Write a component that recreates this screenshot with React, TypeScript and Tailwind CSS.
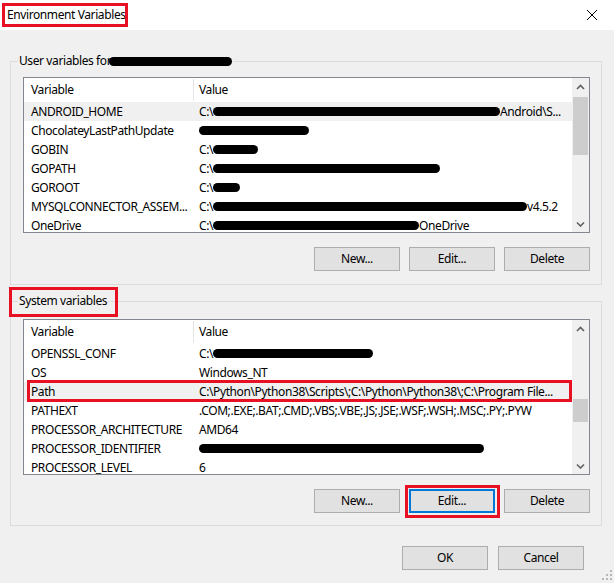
import React from 'react';

type Part = string | { ink: string };
type Row = { name: string; value: Part[]; hl?: boolean; marked?: boolean };

const userRows: Row[] = [
  { name: 'ANDROID_HOME', value: ['C:\\', { ink: 'w-[287px]' }, 'Android\\S...'], hl: true },
  { name: 'ChocolateyLastPathUpdate', value: [{ ink: 'w-[110px]' }] },
  { name: 'GOBIN', value: ['C:\\', { ink: 'w-[45px]' }] },
  { name: 'GOPATH', value: ['C:\\', { ink: 'w-[227px]' }] },
  { name: 'GOROOT', value: ['C:\\', { ink: 'w-[27px]' }] },
  { name: 'MYSQLCONNECTOR_ASSEM...', value: ['C:\\', { ink: 'w-[314px]' }, 'v4.5.2'] },
  { name: 'OneDrive', value: ['C:\\', { ink: 'w-[206px]' }, 'OneDrive'] },
];

const systemRows: Row[] = [
  { name: 'OPENSSL_CONF', value: ['C:\\', { ink: 'w-[160px]' }] },
  { name: 'OS', value: ['Windows_NT'] },
  {
    name: 'Path',
    value: ['C:\\Python\\Python38\\Scripts\\;C:\\Python\\Python38\\;C:\\Program File...'],
    hl: true,
    marked: true,
  },
  { name: 'PATHEXT', value: ['.COM;.EXE;.BAT;.CMD;.VBS;.VBE;.JS;.JSE;.WSF;.WSH;.MSC;.PY;.PYW'] },
  { name: 'PROCESSOR_ARCHITECTURE', value: ['AMD64'] },
  { name: 'PROCESSOR_IDENTIFIER', value: [{ ink: 'w-[285px]' }] },
  { name: 'PROCESSOR_LEVEL', value: ['6'] },
];

function RedBox({ className }: { className: string }) {
  return <span className={`pointer-events-none absolute border-[3px] border-[#e81123] ${className}`} />;
}

function Chevron({ down }: { down?: boolean }) {
  return (
    <svg width="9" height="6" viewBox="0 0 9 6">
      <polyline
        points={down ? '1,1.5 4.5,5 8,1.5' : '1,5 4.5,1.5 8,5'}
        fill="none"
        stroke="#606060"
        strokeWidth="1.6"
      />
    </svg>
  );
}

function VarList({ rows, thumb }: { rows: Row[]; thumb: string }) {
  return (
    <div className="flex h-[156px] min-w-0 border border-[#828790] bg-white">
      <div className="min-w-0 flex-1 overflow-hidden">
        <div className="flex h-[24px] items-center">
          <div className="w-[170px] border-r border-[#e5e5e5] pl-[7px] leading-[22px]">Variable</div>
          <div className="pl-[5px]">Value</div>
        </div>
        {rows.map((row) => (
          <div
            key={row.name}
            className={`relative flex h-[19px] items-center whitespace-nowrap ${row.hl ? 'bg-[#f0f0f0]' : ''}`}
          >
            <div className="w-[170px] shrink-0 pl-[7px]">{row.name}</div>
            <div className="flex items-center pl-[5px]">
              {row.value.map((part, i) =>
                typeof part === 'string' ? (
                  <span key={i}>{part}</span>
                ) : (
                  <span key={i} className={`inline-block h-[9px] rounded-full bg-black ${part.ink}`} />
                )
              )}
            </div>
            {row.marked && <RedBox className="left-[3px] right-0 top-[-2px] bottom-[-1px]" />}
          </div>
        ))}
      </div>
      <div className="flex w-[17px] shrink-0 flex-col bg-[#f0f0f0]">
        <div className="flex h-[17px] items-center justify-center">
          <Chevron />
        </div>
        <div className="flex-1 px-px">
          <div className={`bg-[#cdcdcd] ${thumb}`} />
        </div>
        <div className="flex h-[17px] items-center justify-center">
          <Chevron down />
        </div>
      </div>
    </div>
  );
}

function Button({ label, focused }: { label: string; focused?: boolean }) {
  return (
    <button
      className={`h-[24px] w-[86px] shrink-0 bg-[#e1e1e1] text-[12px] text-black ${
        focused ? 'border-2 border-[#0078d7]' : 'border border-[#adadad]'
      }`}
    >
      {label}
    </button>
  );
}

export default function App() {
  return (
    <div className="relative h-[583px] w-[614px] overflow-hidden bg-[#f0f0f0] font-['Segoe_UI','Noto_Sans',sans-serif] text-[12px] tracking-[-0.4px] text-black">
      {/* title bar */}
      <div className="relative flex h-[30px] items-center justify-between bg-white pl-[7px] pr-[17px]">
        <span className="leading-[16px]">Environment Variables</span>
        <RedBox className="left-[2px] top-[3px] h-[24px] w-[126px]" />
        <svg width="10" height="10" viewBox="0 0 10 10">
          <line x1="0" y1="0" x2="10" y2="10" stroke="#000" strokeWidth="1" />
          <line x1="10" y1="0" x2="0" y2="10" stroke="#000" strokeWidth="1" />
        </svg>
      </div>

      {/* user variables */}
      <fieldset className="ml-[10px] mr-[12px] mt-[23px] min-w-0 border border-[#dcdcdc] pb-[13px] pl-[12px] pr-[11px] pt-[8px]">
        <legend className="ml-[-5px] flex items-center px-px leading-[16px]">
          <span>User variables for</span>
          <span className="ml-[-2px] inline-block h-[9px] w-[123px] rounded-full bg-black" />
        </legend>
        <VarList rows={userRows} thumb="mt-[2px] h-[58px]" />
        <div className="mt-[14px] flex justify-end gap-[9px]">
          <Button label="New..." />
          <Button label="Edit..." />
          <Button label="Delete" />
        </div>
      </fieldset>

      {/* system variables */}
      <fieldset className="ml-[10px] mr-[12px] mt-[8px] min-w-0 border border-[#dcdcdc] pb-[12px] pl-[12px] pr-[11px] pt-[10px]">
        <legend className="relative ml-[-5px] px-px leading-[16px]">
          System variables
          <RedBox className="left-[-9px] right-[-10px] top-[-6px] bottom-[-8px]" />
        </legend>
        <VarList rows={systemRows} thumb="mt-[62px] h-[23px]" />
        <div className="mt-[14px] flex justify-end gap-[9px]">
          <Button label="New..." />
          <div className="relative flex shrink-0">
            <Button label="Edit..." focused />
            <RedBox className="left-[-4px] right-[-5px] top-[-4px] bottom-[-5px]" />
          </div>
          <Button label="Delete" />
        </div>
      </fieldset>

      {/* dialog buttons */}
      <div className="mt-[20px] flex justify-end gap-[10px] pr-[30px]">
        <Button label="OK" />
        <Button label="Cancel" />
      </div>

      {/* resize grip */}
      <svg className="absolute bottom-[3px] right-[2px]" width="10" height="10" viewBox="0 0 10 10">
        <rect x="8" y="0" width="2" height="2" fill="#b8b8b8" />
        <rect x="4" y="4" width="2" height="2" fill="#b8b8b8" />
        <rect x="8" y="4" width="2" height="2" fill="#b8b8b8" />
        <rect x="0" y="8" width="2" height="2" fill="#b8b8b8" />
        <rect x="4" y="8" width="2" height="2" fill="#b8b8b8" />
        <rect x="8" y="8" width="2" height="2" fill="#b8b8b8" />
      </svg>
    </div>
  );
}
